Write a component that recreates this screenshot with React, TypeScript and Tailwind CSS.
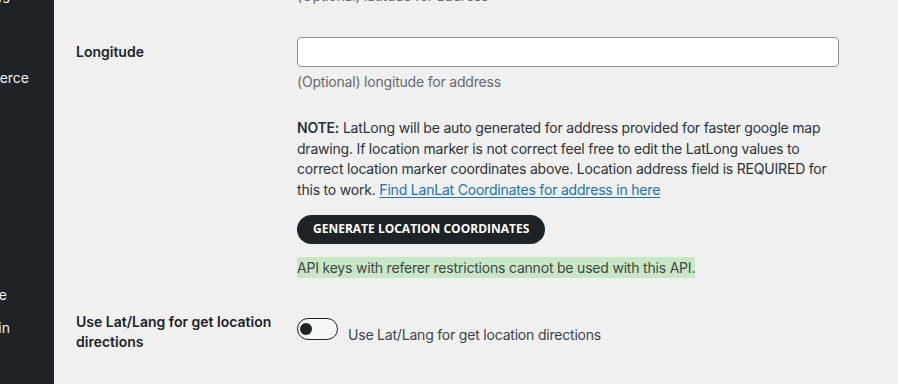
import { useState } from "react";

const sideItems = [
  { label: "Reviews", end: "w-[10px]", top: "-mt-[12px]" },
  { label: "WooCommerce", end: "w-[29px]", top: "mt-[60px]" },
  { label: "Appearance", end: "w-[7px]", top: "mt-[197px]" },
  { label: "Plugin", end: "w-[10px]", top: "mt-[13px]" },
];

export default function App() {
  const [useLatLng, setUseLatLng] = useState(false);

  return (
    <div className="flex h-[384px] w-[898px] overflow-hidden bg-[#f0f0f1] font-['Inter','Noto_Sans',sans-serif] text-[14px] text-[#1d2327]">
      {/* admin menu, scrolled off to the left */}
      <aside className="flex w-[54px] shrink-0 flex-col overflow-hidden bg-[#1d2327] text-[#f0f0f1]">
        {sideItems.map((item) => (
          <div key={item.label} className={`flex justify-end whitespace-nowrap leading-5 ${item.end} ${item.top}`}>
            {item.label}
          </div>
        ))}
      </aside>

      <main className="flex-1 pl-[22px]">
        {/* latitude row tail */}
        <div className="flex">
          <div className="w-[221px] shrink-0" />
          <p className="-mt-[14px] leading-5 tracking-[-0.2px] text-[#646970]">(Optional) latitude for address</p>
        </div>

        {/* longitude */}
        <div className="mt-[31px] flex">
          <label className="w-[221px] shrink-0 pt-[5px] font-semibold leading-5">Longitude</label>
          <div className="w-[542px]">
            <input
              type="text"
              className="block h-[30px] w-full rounded-[4px] border border-[#8c8f94] bg-white px-2 outline-none"
            />
            <p className="mt-[5px] leading-5 tracking-[-0.2px] text-[#646970]">(Optional) longitude for address</p>

            <p className="mt-[26px] leading-[20.7px] tracking-[-0.2px] text-[#2c3338]">
              <strong className="font-semibold">NOTE:</strong> LatLong will be auto generated for address provided for faster google map
              drawing. If location marker is not correct feel free to edit the LatLong values to correct location marker
              coordinates above. Location address field is REQUIRED for this to work.{" "}
              <a href="#" className="text-[#2271b1] underline underline-offset-2">
                Find LanLat Coordinates for address in here
              </a>
            </p>

            <button className="mt-[14px] flex h-[29px] items-center rounded-full bg-[#1d2327] px-[16px] font-['Open_Sans',sans-serif] text-[12px] font-bold uppercase text-white">
              Generate Location Coordinates
            </button>

            <div className="mt-[13px] inline-block bg-[#c9e6c6] leading-[21px] tracking-[-0.2px] text-[#3c4a42]">
              API keys with referer restrictions cannot be used with this API.
            </div>
          </div>
        </div>

        {/* lat/lng directions */}
        <div className="mt-[31px] flex">
          <label className="w-[221px] shrink-0 pr-[21px] pt-[3px] font-semibold leading-5">
            Use Lat/Lang for get location directions
          </label>
          <div className="mt-[9px] flex items-start gap-[10px]">
            <button
              onClick={() => setUseLatLng(!useLatLng)}
              className={`flex h-[22px] w-[41px] items-center rounded-full border-[1.5px] border-[#1d2327] px-[2px] ${
                useLatLng ? "justify-end bg-[#1d2327]" : "justify-start bg-[#f6f7f7]"
              }`}
            >
              <span className={`h-[12px] w-[12px] rounded-full ${useLatLng ? "bg-white" : "bg-[#1d2327]"}`} />
            </button>
            <span className="pt-[7px] leading-5 tracking-[-0.2px] text-[#3c434a]">Use Lat/Lang for get location directions</span>
          </div>
        </div>
      </main>
    </div>
  );
}
